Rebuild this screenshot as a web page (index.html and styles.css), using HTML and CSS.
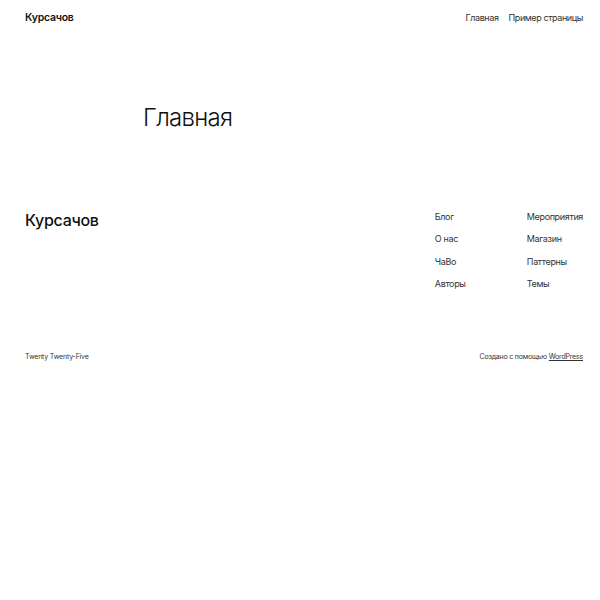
FILE: index.html
```html
<!DOCTYPE html>
<html lang="ru">
<head>
<meta charset="utf-8">
<title>Курсачов</title>
<link rel="stylesheet" href="styles.css">
</head>
<body>
<header class="site-header">
  <a class="site-title" href="#">Курсачов</a>
  <nav class="main-nav">
    <a href="#">Главная</a>
    <a href="#">Пример страницы</a>
  </nav>
</header>
<main class="content">
  <h1 class="page-title">Главная</h1>
</main>
<footer class="site-footer">
  <div class="footer-top">
    <h2 class="footer-title">Курсачов</h2>
    <div class="footer-nav">
      <ul class="footer-col">
        <li><a href="#">Блог</a></li>
        <li><a href="#">О нас</a></li>
        <li><a href="#">ЧаВо</a></li>
        <li><a href="#">Авторы</a></li>
      </ul>
      <ul class="footer-col">
        <li><a href="#">Мероприятия</a></li>
        <li><a href="#">Магазин</a></li>
        <li><a href="#">Паттерны</a></li>
        <li><a href="#">Темы</a></li>
      </ul>
    </div>
  </div>
  <div class="footer-bottom">
    <span>Twenty Twenty-Five</span>
    <span>Создано с помощью <a class="wp-link" href="#">WordPress</a></span>
  </div>
</footer>
</body>
</html>
```
FILE: styles.css
```css
* { box-sizing: border-box; }
html, body { margin: 0; padding: 0; background: #fff; }
body {
  font-family: Inter, "Noto Sans", sans-serif;
  color: #111;
  padding: 0 17px 0 25px;
}
a { color: inherit; text-decoration: none; }
.site-header {
  height: 34px;
  display: flex;
  justify-content: space-between;
  align-items: center;
}
.site-title {
  font-size: 10.5px;
  font-weight: 600;
  letter-spacing: -0.25px;
}
.main-nav {
  display: flex;
  gap: 10px;
  font-size: 9px;
  letter-spacing: -0.4px;
  color: #333;
}
.content {
  max-width: 322px;
  margin: 0 auto;
  padding-top: 66px;
  height: 175px;
}
.page-title {
  margin: 0;
  font-size: 24px;
  font-weight: 300;
  letter-spacing: -0.7px;
  line-height: 36px;
}
.footer-top {
  display: flex;
  justify-content: space-between;
  align-items: flex-start;
}
.footer-title {
  margin: 0;
  font-size: 16px;
  font-weight: 500;
  letter-spacing: -0.3px;
  line-height: 22px;
}
.footer-nav {
  display: flex;
  padding-top: 2px;
}
.footer-col {
  list-style: none;
  margin: 0;
  padding: 0;
  width: 92px;
  font-size: 9px;
  letter-spacing: -0.35px;
  color: #333;
  display: flex;
  flex-direction: column;
  gap: 11px;
}
.footer-col:last-child { width: auto; }
.footer-col li { line-height: 11.3px; }
.footer-bottom {
  margin-top: 63px;
  display: flex;
  justify-content: space-between;
  font-size: 7px;
  letter-spacing: -0.2px;
  color: #333;
}
.wp-link { text-decoration: underline; }
```
